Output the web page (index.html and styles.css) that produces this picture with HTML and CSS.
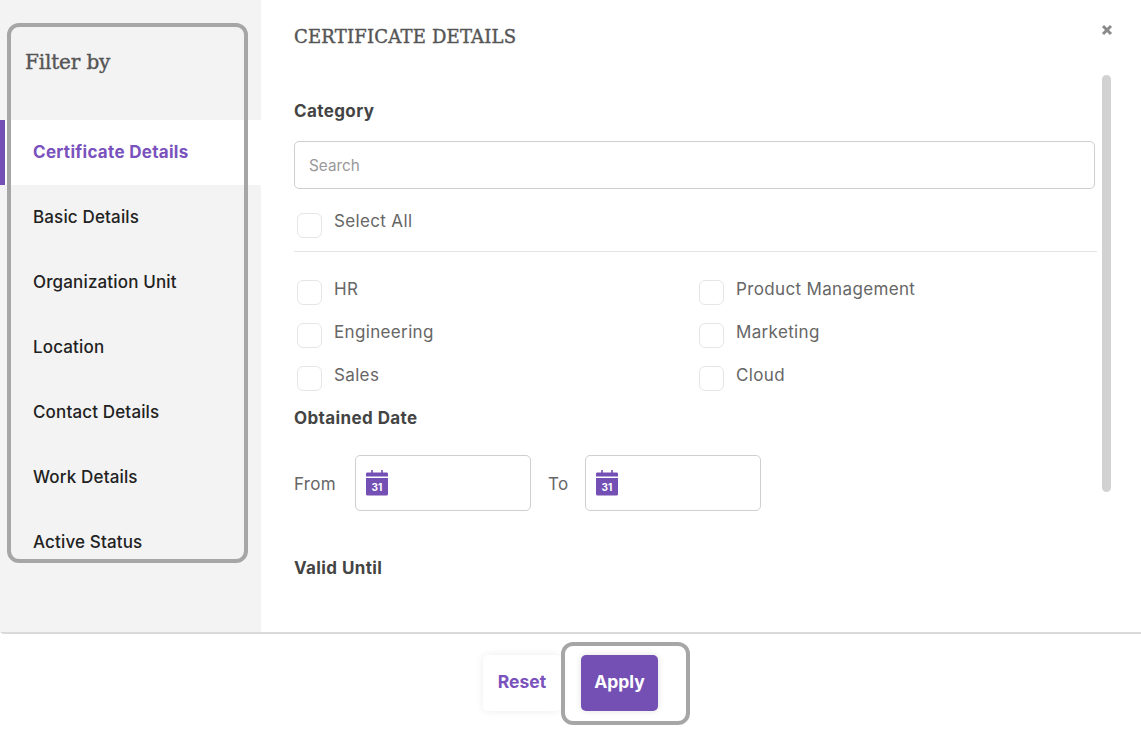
FILE: index.html
```html
<!DOCTYPE html>
<html lang="en">

<head>
  <meta charset="UTF-8">
  <meta name="viewport" content="width=device-width, initial-scale=1.0">
  <title>Filter by</title>
  <link rel="stylesheet" href="styles.css">
</head>

<body>
  <div class="modal">
    <aside class="sidebar">
      <h2 class="sidebar-title">Filter by</h2>
      <ul class="tabs">
        <li class="tab active">Certificate Details</li>
        <li class="tab">Basic Details</li>
        <li class="tab">Organization Unit</li>
        <li class="tab">Location</li>
        <li class="tab">Contact Details</li>
        <li class="tab">Work Details</li>
        <li class="tab">Active Status</li>
      </ul>
    </aside>

    <main class="content">
      <div class="content-head">
        <h1>CERTIFICATE DETAILS</h1>
        <svg class="close" viewBox="0 0 12 12" width="12" height="12" aria-label="Close">
          <path d="M2 2l8 8M10 2l-8 8" stroke="#8a8a8a" stroke-width="3" fill="none" />
        </svg>
      </div>

      <h3 class="section category-title">Category</h3>
      <input class="search" type="text" placeholder="Search">

      <label class="check select-all"><span class="box"></span>Select All</label>

      <div class="options">
        <label class="check"><span class="box"></span>HR</label>
        <label class="check"><span class="box"></span>Product Management</label>
        <label class="check"><span class="box"></span>Engineering</label>
        <label class="check"><span class="box"></span>Marketing</label>
        <label class="check"><span class="box"></span>Sales</label>
        <label class="check"><span class="box"></span>Cloud</label>
      </div>

      <h3 class="section">Obtained Date</h3>
      <div class="date-row">
        <span class="date-label from">From</span>
        <div class="date-input">
          <svg viewBox="0 0 24 26" width="24" height="26">
            <path d="M7 0v5M17 0v5" stroke="#7450b5" stroke-width="1.6" />
            <path d="M2 2.500h20a1.500 1.500 0 0 1 1 1.500v2.500H1V4a1.500 1.500 0 0 1 1-1.500z" fill="#7450b5" />
            <path d="M1 8h22v16a1.500 1.500 0 0 1-1.500 1.500h-19A1.500 1.500 0 0 1 1 24z" fill="#7450b5" />
            <text x="12" y="21" class="cal-num" text-anchor="middle">31</text>
          </svg>
        </div>
        <span class="date-label to">To</span>
        <div class="date-input">
          <svg viewBox="0 0 24 26" width="24" height="26">
            <path d="M7 0v5M17 0v5" stroke="#7450b5" stroke-width="1.6" />
            <path d="M2 2.500h20a1.500 1.500 0 0 1 1 1.500v2.500H1V4a1.500 1.500 0 0 1 1-1.500z" fill="#7450b5" />
            <path d="M1 8h22v16a1.500 1.500 0 0 1-1.500 1.500h-19A1.500 1.500 0 0 1 1 24z" fill="#7450b5" />
            <text x="12" y="21" class="cal-num" text-anchor="middle">31</text>
          </svg>
        </div>
      </div>

      <h3 class="section valid-until">Valid Until</h3>
      <div class="scrollbar"></div>
    </main>
  </div>

  <footer class="actions">
    <button class="btn reset">Reset</button>
    <button class="btn apply">Apply</button>
  </footer>

  <!-- highlight boxes drawn over the screen -->
  <div class="mark mark-filter"></div>
  <div class="mark mark-apply"></div>
</body>

</html>
```
FILE: styles.css
```css
* {
  box-sizing: border-box;
}

body {
  margin: 0;
  height: 729px;
  overflow: hidden;
  background-color: #fff;
  font-family: Inter, "Noto Sans", sans-serif;
  color: #555;
}

.modal {
  display: flex;
  height: 634px;
  border-bottom: 2px solid #d9d9d9;
  border-bottom-left-radius: 4px;
}

.sidebar {
  width: 261px;
  flex-shrink: 0;
  background-color: #f3f3f3;
  overflow: hidden;
}

.sidebar-title {
  margin: 0;
  height: 120px;
  padding: 48px 0 0 25px;
  font-family: "DejaVu Serif", serif;
  font-size: 20px;
  line-height: 28px;
  font-weight: 500;
  letter-spacing: -0.15px;
  -webkit-text-stroke: 0.4px #555;
  color: #555;
}

.tabs {
  list-style: none;
  margin: 0;
  padding: 0;
}

.tab {
  height: 65px;
  padding-left: 33px;
  font-size: 17px;
  font-weight: 500;
  line-height: 65px;
  letter-spacing: 0.15px;
  color: #222;
}

.tab.active {
  background-color: #fff;
  border-left: 5px solid #7450b5;
  padding-left: 28px;
  font-weight: 700;
  letter-spacing: 0.3px;
  color: #7a52bd;
}

.content {
  position: relative;
  flex: 1;
  padding: 0 44px 0 33px;
}

.content-head {
  display: flex;
  justify-content: space-between;
  height: 98px;
  padding-top: 24px;
}

.content-head h1 {
  margin: 0;
  font-family: "DejaVu Serif", serif;
  font-size: 18px;
  line-height: 26px;
  font-weight: 500;
  letter-spacing: 0.2px;
  -webkit-text-stroke: 0.4px #555;
  color: #555;
}

.close {
  margin: 0 -16px 0 0;
}

.section {
  margin: 0;
  font-size: 17px;
  line-height: 26px;
  font-weight: 700;
  letter-spacing: 0.4px;
  color: #444;
}

.category-title {
  height: 43px;
}

.search {
  display: block;
  width: 801px;
  height: 48px;
  padding: 0 14px;
  border: 1.5px solid #cfcfcf;
  border-radius: 5px;
  font-family: inherit;
  font-size: 15.3px;
  color: #555;
  outline: none;
}

.search::placeholder {
  color: #999;
}

.check {
  display: flex;
  align-items: flex-start;
  gap: 12px;
  height: 43px;
  padding-left: 3px;
  font-size: 17px;
  line-height: 19px;
  letter-spacing: 0.35px;
  color: #666;
}

.box {
  width: 25px;
  height: 25px;
  border: 1.5px solid #e6e6e6;
  border-radius: 6px;
  background-color: #fff;
  flex-shrink: 0;
}

.select-all {
  height: 40px;
  margin-top: 22px;
  line-height: 20px;
}

.select-all .box {
  margin-top: 2px;
}

.options {
  display: grid;
  grid-template-columns: 402px 1fr;
  width: 803px;
  padding-top: 28px;
  border-top: 1.5px solid #e4e4e4;
  height: 154px;
}

.date-row {
  display: flex;
  align-items: center;
  height: 56px;
  margin-top: 24px;
}

.date-label {
  padding-top: 2px;
  font-size: 17px;
  letter-spacing: 0.3px;
  color: #666;
}

.from {
  width: 61px;
}

.to {
  width: 54px;
  padding-left: 17px;
}

.date-input {
  display: flex;
  align-items: center;
  width: 176px;
  height: 56px;
  padding-left: 9px;
  border: 1.5px solid #cfcfcf;
  border-radius: 5px;
}

.cal-num {
  font-family: Inter, sans-serif;
  font-size: 10px;
  font-weight: 700;
  fill: #fff;
}

.valid-until {
  margin-top: 44px;
}

.scrollbar {
  position: absolute;
  top: 75px;
  left: 841px;
  width: 9px;
  height: 417px;
  border-radius: 5px;
  background-color: #d2d2d2;
}

.actions {
  display: flex;
  justify-content: center;
  gap: 20px;
  padding-top: 21px;
}

.btn {
  width: 78px;
  height: 56px;
  padding: 0 0 4px;
  border: none;
  border-radius: 5px;
  font-family: inherit;
  font-size: 17.5px;
  font-weight: 700;
}

.reset {
  background-color: #fff;
  color: #7a52bd;
  box-shadow: 0 0 8px rgba(0, 0, 0, 0.08);
}

.apply {
  width: 77px;
  background-color: #7450b5;
  color: #fff;
  box-shadow: 0 0 6px rgba(0, 0, 0, 0.12);
}

.mark {
  position: absolute;
  border: 4px solid #a6a6a6;
  border-radius: 12px;
}

.mark-filter {
  left: 7px;
  top: 23px;
  width: 241px;
  height: 540px;
}

.mark-apply {
  left: 561px;
  top: 642px;
  width: 129px;
  height: 83px;
}
```
